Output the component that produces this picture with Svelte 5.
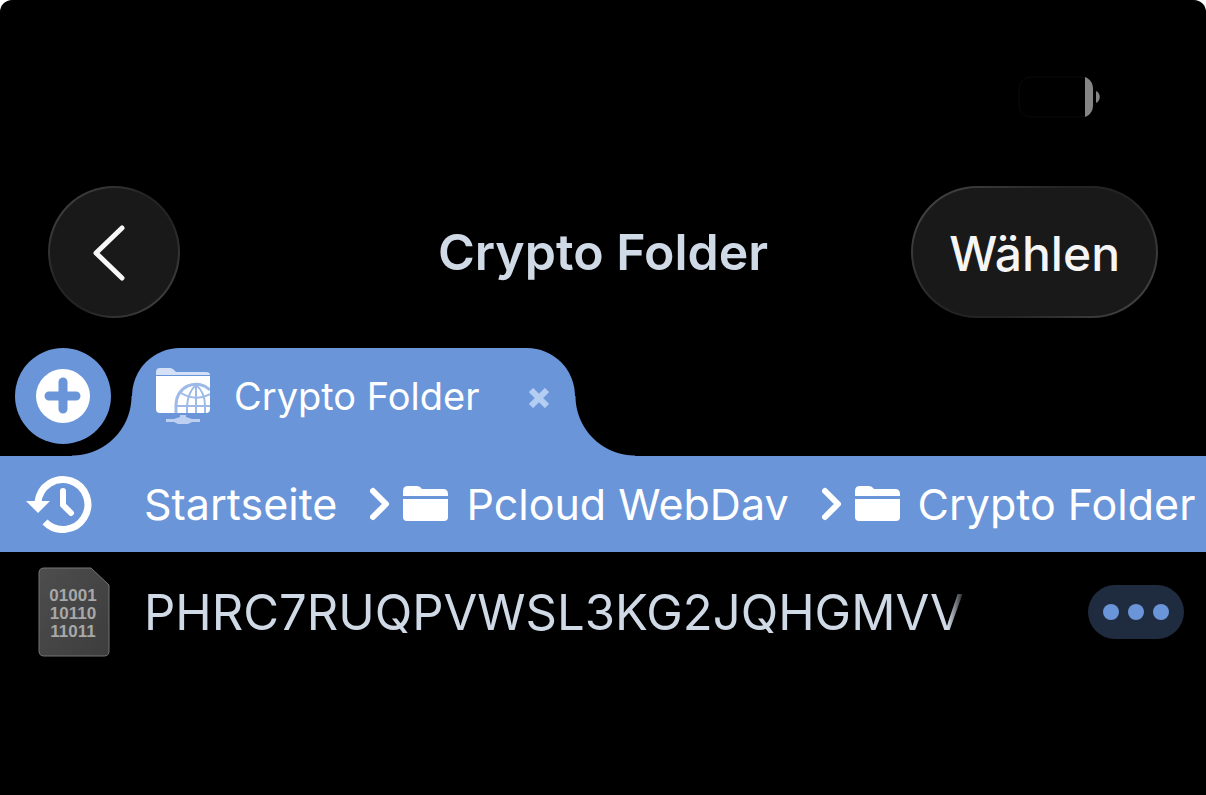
<script>
  let tabs = [{ id: 1, name: "Crypto Folder" }];

  const crumbs = [
    { name: "Startseite", folder: false },
    { name: "Pcloud WebDav", folder: true },
    { name: "Crypto Folder", folder: true }
  ];

  const files = [{ name: "PHRC7RUQPVWSL3KG2JQHGMVV" }];
</script>

<div class="screen">
  <div class="status-bar">
    <svg class="battery" viewBox="0 0 84 42" aria-hidden="true">
      <rect x="1" y="1" width="74" height="40" rx="12" fill="none" stroke="#0b0b0b" />
      <path d="M67 1 C72 3 75 7 75 13 V29 C75 35 72 39 67 41 Z" fill="#858585" />
      <path d="M78 15 C83 17 83 25 78 27 Z" fill="#858585" />
    </svg>
  </div>

  <header>
    <div class="side">
      <button type="button" class="glass back" aria-label="Zurück">
        <svg viewBox="0 0 36 60">
          <path d="M30 6 L4 31 L30 56" fill="none" stroke="#f7f7f7" stroke-width="5" stroke-linecap="round" stroke-linejoin="round" />
        </svg>
      </button>
    </div>
    <h1>Crypto Folder</h1>
    <div class="side end">
      <button type="button" class="glass select">Wählen</button>
    </div>
  </header>

  <div class="tabs">
    <button type="button" class="add" aria-label="Neuer Tab">
      <svg viewBox="0 0 54 54">
        <circle cx="27" cy="27" r="27" fill="#fff" />
        <path d="M27 13 V40 M13 27 H40" stroke="#6a95d9" stroke-width="9" stroke-linecap="round" />
      </svg>
    </button>
    {#each tabs as tab (tab.id)}
      <div class="tab">
        <svg class="tab-icon" viewBox="0 0 54 56" aria-hidden="true">
          <path d="M0 7 V4 Q0 0 4 0 H14 Q16 0 18 2 L20 4 H50 Q54 4 54 7 Z" fill="#d3e0f6" />
          <path d="M0 8 H54 V41 Q54 45 50 45 H4 Q0 45 0 41 Z" fill="#fff" />
          <g fill="none" stroke="#9dbae8" stroke-width="3">
            <path d="M20 45 V37 A20 20 0 0 1 54 22" />
            <path d="M31 45 V38 Q32 24 40 17 Q49 24 49 38 V45" stroke-width="2" />
            <path d="M40 17 V45 M20 38 H54 M25 25 Q40 34 54 26" stroke-width="2" />
          </g>
          <path d="M24 47 H30 V49 L36 51 H44 V54 H36 L32 56 H22 L18 54 H10 V51 H18 L24 49 Z" fill="#bdd0f2" />
        </svg>
        <span>{tab.name}</span>
        <button type="button" class="close" aria-label="Tab schließen">
          <svg viewBox="0 0 20 20">
            <path d="M2 2 L18 18 M18 2 L2 18" stroke="#b4cdf2" stroke-width="6" />
          </svg>
        </button>
      </div>
    {/each}
  </div>

  <nav>
    <button type="button" class="history" aria-label="Verlauf">
      <svg viewBox="0 0 66 58">
        <path d="M12 27 A25 25 0 1 1 19 47" fill="none" stroke="#fff" stroke-width="7" />
        <path d="M0 26 H24 L12 38 Z" fill="#fff" />
        <path d="M37 16 V30 L45 38" fill="none" stroke="#fff" stroke-width="6" stroke-linecap="round" stroke-linejoin="round" />
      </svg>
    </button>
    <ol>
      {#each crumbs as crumb, i}
        <li>
          {#if i > 0}
            <svg class="arrow" viewBox="0 0 20 34" aria-hidden="true">
              <path d="M3 4 L16 17 L3 30" fill="none" stroke="#fff" stroke-width="6" stroke-linecap="round" stroke-linejoin="round" />
            </svg>
          {/if}
          <a href="#{i}">
            {#if crumb.folder}
              <svg class="folder" viewBox="0 0 45 36" aria-hidden="true">
                <path d="M0 10 V5 Q0 0 5 0 H14 Q17 0 19 3 H40 Q45 3 45 8 V10 Z" fill="#fff" />
                <path d="M0 13 H45 V31 Q45 35 41 35 H4 Q0 35 0 31 Z" fill="#fff" />
              </svg>
            {/if}
            {crumb.name}
          </a>
        </li>
      {/each}
    </ol>
  </nav>

  <ul class="files">
    {#each files as file}
      <li>
        <svg class="file-icon" viewBox="0 0 72 90" aria-hidden="true">
          <defs>
            <linearGradient id="paper" x1="0" y1="0" x2="1" y2="1">
              <stop offset="0" stop-color="#4d4d4d" />
              <stop offset="1" stop-color="#3d3d3d" />
            </linearGradient>
          </defs>
          <path d="M6 1 H53 L71 18 V84 Q71 89 66 89 H6 Q1 89 1 84 V6 Q1 1 6 1 Z" fill="url(#paper)" stroke="#757575" />
          <g font-family="Liberation Sans, Arial, sans-serif" font-size="17" font-weight="700" fill="#a8a8a8" text-anchor="middle">
            <text x="35" y="34">01001</text>
            <text x="35" y="52">10110</text>
            <text x="35" y="70">11011</text>
          </g>
        </svg>
        <span class="file-name">{file.name}</span>
        <button type="button" class="more" aria-label="Mehr">
          <i></i><i></i><i></i>
        </button>
      </li>
    {/each}
  </ul>
</div>

<style>
  :global(body) {
    margin: 0;
    background-color: white;
  }

  .screen {
    --blue: #6a95d9;
    --text: #d0dae6;
    min-height: 100vh;
    overflow: hidden;
    border-radius: 12px 12px 0 0;
    background-color: black;
    font-family: Inter, "Liberation Sans", sans-serif;
  }

  button {
    padding: 0;
    border: none;
    background: none;
    font-family: inherit;
    cursor: pointer;
  }

  svg {
    display: block;
    flex-shrink: 0;
  }

  .status-bar {
    display: flex;
    justify-content: flex-end;
    padding: 76px 104px 68px 0;
  }

  .battery {
    width: 84px;
    height: 42px;
  }

  header {
    display: flex;
    align-items: center;
    padding: 0 48px 30px;
  }

  .side {
    display: flex;
    flex: 1;
  }

  .end {
    justify-content: flex-end;
  }

  h1 {
    margin: 0;
    color: var(--text);
    font-size: 50px;
    font-weight: 600;
    line-height: 60px;
    white-space: nowrap;
  }

  .glass {
    display: flex;
    align-items: center;
    justify-content: center;
    box-sizing: border-box;
    height: 132px;
    border: 2px solid transparent;
    border-radius: 66px;
    background:
      linear-gradient(#191919, #191919) padding-box,
      linear-gradient(135deg, #4a4a4a, #242424 40%, #242424 60%, #4a4a4a) border-box;
  }

  .back {
    width: 132px;
    padding-right: 8px;
  }

  .back svg {
    width: 36px;
    height: 60px;
  }

  .select {
    padding: 2px 36px 0;
    color: #f5f5f5;
    font-size: 48px;
    font-weight: 500;
  }

  .tabs {
    display: flex;
    gap: 21px;
    padding-left: 15px;
  }

  .add {
    display: flex;
    align-items: center;
    justify-content: center;
    width: 96px;
    height: 96px;
    border-radius: 50%;
    background-color: var(--blue);
  }

  .add svg {
    width: 54px;
    height: 54px;
  }

  .tab {
    position: relative;
    display: flex;
    align-items: center;
    box-sizing: border-box;
    height: 108px;
    padding: 0 24px 12px;
    border-radius: 48px 48px 0 0;
    background-color: var(--blue);
    color: white;
    font-size: 38px;
  }

  /* the curved feet that run into the path bar */
  .tab::before,
  .tab::after {
    content: "";
    position: absolute;
    bottom: 0;
    width: 60px;
    height: 60px;
    pointer-events: none;
  }

  .tab::before {
    right: 100%;
    background: radial-gradient(circle at 0 0, transparent 59px, var(--blue) 60px);
  }

  .tab::after {
    left: 100%;
    background: radial-gradient(circle at 100% 0, transparent 59px, var(--blue) 60px);
  }

  .tab-icon {
    width: 54px;
    height: 56px;
    margin-right: 24px;
  }

  .close {
    margin: 4px 2px 0 50px;
  }

  .close svg {
    width: 20px;
    height: 20px;
  }

  nav {
    display: flex;
    align-items: center;
    height: 96px;
    padding-left: 26px;
    background-color: var(--blue);
  }

  .history svg {
    width: 66px;
    height: 58px;
  }

  ol,
  ul {
    margin: 0;
    padding: 0;
    list-style: none;
  }

  ol {
    display: flex;
    gap: 33px;
    margin-left: 52px;
    white-space: nowrap;
  }

  ol li,
  ol a {
    display: flex;
    align-items: center;
  }

  ol a {
    gap: 18px;
    color: white;
    font-size: 43px;
    text-decoration: none;
  }

  .arrow {
    width: 20px;
    height: 34px;
    margin-right: 13px;
  }

  .folder {
    width: 45px;
    height: 36px;
  }

  .files li {
    display: flex;
    align-items: center;
    height: 120px;
    padding: 0 22px 0 38px;
  }

  .file-icon {
    width: 72px;
    height: 90px;
  }

  .file-name {
    flex: 1;
    min-width: 0;
    margin: 0 122px 0 34px;
    overflow: hidden;
    color: var(--text);
    font-size: 49px;
    white-space: nowrap;
    mask-image: linear-gradient(to left, transparent, black 18px);
  }

  .more {
    display: flex;
    align-items: center;
    justify-content: center;
    gap: 9px;
    width: 96px;
    height: 54px;
    border-radius: 27px;
    background-color: #1f2c3f;
  }

  .more i {
    width: 16px;
    height: 16px;
    border-radius: 50%;
    background-color: var(--blue);
  }
</style>
